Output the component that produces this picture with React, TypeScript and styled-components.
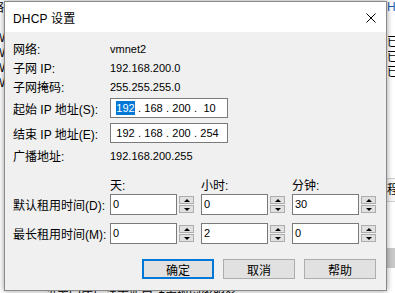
import React from "react";
import styled, { createGlobalStyle } from "styled-components";

const GlobalStyle = createGlobalStyle`
  html, body {
    margin: 0;
    padding: 0;
  }

  body {
    width: 395px;
    height: 293px;
    overflow: hidden;
    background: #ffffff;
    font-family: "Liberation Sans", "Noto Sans CJK SC", sans-serif;
    color: #000;
  }
`;

const Desktop = styled.div`
  position: relative;
  width: 395px;
  height: 293px;
  overflow: hidden;
  display: flex;
  background: #ffffff;
`;

const LeftPeek = styled.div`
  width: 4px;
  overflow: hidden;
  display: flex;
  flex-direction: column;
  font-size: 12px;
  line-height: 15px;
  padding-top: 1px;
`;

const PeekLine = styled.div<{ $shift?: number; $color?: string }>`
  white-space: nowrap;
  margin-left: ${(p) => p.$shift ?? 0}px;
  color: ${(p) => p.$color ?? "#000"};
`;

const Middle = styled.div`
  flex: 1;
  display: flex;
  flex-direction: column;
  justify-content: flex-end;
  padding-left: 41px;
  font-size: 12px;
  line-height: 14px;
  margin-bottom: -10px;
`;

const RightPeek = styled.div`
  width: 8px;
  overflow: hidden;
  display: flex;
  flex-direction: column;
  font-size: 12px;
  line-height: 15px;
  padding-left: 1px;
`;

const RightGap = styled.div<{ $h: number }>`
  height: ${(p) => p.$h}px;
  flex-shrink: 0;
`;

const RightTab = styled.div`
  border-top: 1px solid #cfcfcf;
  border-bottom: 1px solid #cfcfcf;
  height: 22px;
  line-height: 22px;
  background: #f7f7f7;
  white-space: nowrap;
  flex-shrink: 0;
`;

const RightBlock = styled.div`
  height: 20px;
  background: #c9c9c9;
  flex-shrink: 0;
`;

/* dialog window */
const Dialog = styled.div`
  position: absolute;
  left: 4px;
  top: 1px;
  width: 383px;
  height: 290px;
  box-sizing: border-box;
  border: 1px solid #8a8a8a;
  background: #f0f0f0;
  box-shadow: 0 0 6px rgba(0, 0, 0, 0.4);
  display: flex;
  flex-direction: column;
`;

const TitleBar = styled.div`
  height: 30px;
  flex-shrink: 0;
  background: #ffffff;
  display: flex;
  align-items: center;
  justify-content: space-between;
  padding: 0 10px 0 8px;
  font-size: 12px;
`;

const Title = styled.span`
  font-size: 12px;
  letter-spacing: 0.2px;
`;

const Close = styled.svg`
  width: 10px;
  height: 10px;
  margin-top: 1px;
`;

const Body = styled.div`
  flex: 1;
  display: flex;
  flex-direction: column;
  padding: 7px 10px 0 8px;
`;

const Row = styled.div<{ $h: number; $mt?: number }>`
  display: grid;
  grid-template-columns: 97px 1fr;
  align-items: center;
  height: ${(p) => p.$h}px;
  margin-top: ${(p) => p.$mt ?? 0}px;
  font-size: 12px;
`;

const Label = styled.span`
  font-size: 12px;
  white-space: nowrap;
`;

const Value = styled.span`
  font-size: 11px;
`;

const IpBox = styled.div`
  width: 118px;
  height: 20px;
  box-sizing: border-box;
  border: 1px solid #7a7a7a;
  background: #ffffff;
  display: flex;
  align-items: center;
  padding-left: 5px;
  font-size: 11px;
`;

const Octet = styled.span<{ $selected?: boolean; $w?: number }>`
  display: inline-block;
  width: ${(p) => p.$w ?? 19}px;
  height: 14px;
  line-height: 14px;
  text-align: center;
  background: ${(p) => (p.$selected ? "#0078d7" : "transparent")};
  color: ${(p) => (p.$selected ? "#ffffff" : "#000")};
`;

const Dot = styled.span`
  display: inline-block;
  width: 9px;
  text-align: center;
`;

const LeaseGrid = styled.div<{ $h: number; $mt: number }>`
  display: grid;
  grid-template-columns: 97px repeat(3, 91px);
  align-items: center;
  height: ${(p) => p.$h}px;
  margin-top: ${(p) => p.$mt}px;
  font-size: 12px;
`;

const Spin = styled.div`
  display: flex;
  align-items: flex-start;
  height: 100%;
`;

const SpinInput = styled.div`
  width: 67px;
  height: 21px;
  box-sizing: border-box;
  border: 1px solid #7a7a7a;
  background: #ffffff;
  padding-left: 2px;
  font-size: 11px;
  line-height: 19px;
`;

const SpinButtons = styled.div`
  display: flex;
  flex-direction: column;
  gap: 1px;
  margin: 2px 0 0 2px;
`;

const SpinButton = styled.div`
  width: 15px;
  height: 8px;
  box-sizing: border-box;
  border: 1px solid #adadad;
  background: #e1e1e1;
  display: flex;
  align-items: center;
  justify-content: center;
`;

const Arrow = styled.div<{ $down?: boolean }>`
  width: 0;
  height: 0;
  border-left: 3px solid transparent;
  border-right: 3px solid transparent;
  ${(p) =>
    p.$down ? "border-top: 3px solid #000;" : "border-bottom: 3px solid #000;"}
`;

const ButtonRow = styled.div`
  display: flex;
  justify-content: flex-end;
  gap: 9px;
  margin-top: 15px;
`;

const Button = styled.div<{ $default?: boolean }>`
  width: 72px;
  height: 20px;
  box-sizing: border-box;
  border: ${(p) => (p.$default ? "2px solid #0078d7" : "1px solid #adadad")};
  background: #e1e1e1;
  display: flex;
  align-items: center;
  justify-content: center;
  font-size: 12px;
`;

const SpinField: React.FC<{ value: string }> = ({ value }) => (
  <Spin>
    <SpinInput>{value}</SpinInput>
    <SpinButtons>
      <SpinButton>
        <Arrow />
      </SpinButton>
      <SpinButton>
        <Arrow $down />
      </SpinButton>
    </SpinButtons>
  </Spin>
);

const IpField: React.FC<{ parts: string[]; selectFirst?: boolean }> = ({
  parts,
  selectFirst,
}) => (
  <IpBox>
    {parts.map((part, i) => (
      <React.Fragment key={i}>
        {i > 0 && <Dot>.</Dot>}
        <Octet $selected={selectFirst && i === 0}>{part}</Octet>
      </React.Fragment>
    ))}
  </IpBox>
);

const App: React.FC = () => {
  return (
    <>
      <GlobalStyle />
      <Desktop>
        {/* BACKGROUND WINDOW */}
        <LeftPeek>
          <PeekLine $shift={-8}>络</PeekLine>
          <PeekLine>&nbsp;</PeekLine>
          <PeekLine $shift={-6}>W</PeekLine>
          <PeekLine $shift={-6}>W</PeekLine>
          <PeekLine $shift={-6}>W</PeekLine>
          <PeekLine $shift={-6}>W</PeekLine>
        </LeftPeek>

        <Middle>
          <PeekLine>设置完成后请重新启动虚拟网络服务。</PeekLine>
        </Middle>

        <RightPeek>
          <PeekLine $color="#1a5fb4">HC</PeekLine>
          <RightGap $h={20} />
          <PeekLine>已启</PeekLine>
          <PeekLine>已启</PeekLine>
          <PeekLine>已启</PeekLine>
          <RightGap $h={98} />
          <RightTab>程</RightTab>
          <RightGap $h={46} />
          <RightBlock />
        </RightPeek>

        {/* DIALOG */}
        <Dialog>
          <TitleBar>
            <Title>DHCP 设置</Title>
            <Close viewBox="0 0 10 10">
              <path d="M0.5 0.5 L9.5 9.5 M9.5 0.5 L0.5 9.5" stroke="#000" strokeWidth="1" />
            </Close>
          </TitleBar>

          <Body>
            <Row $h={19}>
              <Label>网络:</Label>
              <Value>vmnet2</Value>
            </Row>
            <Row $h={19}>
              <Label>子网 IP:</Label>
              <Value>192.168.200.0</Value>
            </Row>
            <Row $h={19}>
              <Label>子网掩码:</Label>
              <Value>255.255.255.0</Value>
            </Row>

            <Row $h={20} $mt={2}>
              <Label>起始 IP 地址(S):</Label>
              <IpField parts={["192", "168", "200", "10"]} selectFirst />
            </Row>
            <Row $h={20} $mt={5}>
              <Label>结束 IP 地址(E):</Label>
              <IpField parts={["192", "168", "200", "254"]} />
            </Row>
            <Row $h={19} $mt={3}>
              <Label>广播地址:</Label>
              <Value>192.168.200.255</Value>
            </Row>

            {/* LEASE TIMES */}
            <LeaseGrid $h={14} $mt={11}>
              <span />
              <Label>天:</Label>
              <Label>小时:</Label>
              <Label>分钟:</Label>
            </LeaseGrid>
            <LeaseGrid $h={21} $mt={4}>
              <Label>默认租用时间(D):</Label>
              <SpinField value="0" />
              <SpinField value="0" />
              <SpinField value="30" />
            </LeaseGrid>
            <LeaseGrid $h={21} $mt={8}>
              <Label>最长租用时间(M):</Label>
              <SpinField value="0" />
              <SpinField value="2" />
              <SpinField value="0" />
            </LeaseGrid>

            <ButtonRow>
              <Button $default>确定</Button>
              <Button>取消</Button>
              <Button>帮助</Button>
            </ButtonRow>
          </Body>
        </Dialog>
      </Desktop>
    </>
  );
};

export default App;
